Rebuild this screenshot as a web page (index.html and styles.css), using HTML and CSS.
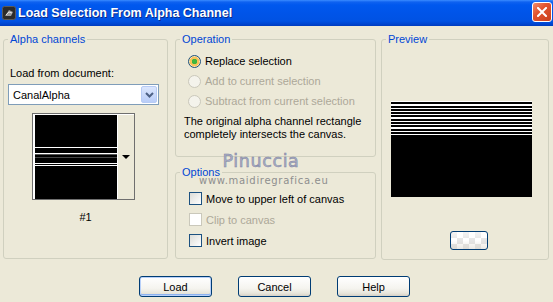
FILE: index.html
```html
<!DOCTYPE html>
<html lang="en">
<head>
  <meta charset="UTF-8" />
  <title>Load Selection From Alpha Channel</title>
  <link rel="stylesheet" href="styles.css">
</head>
<body>
  <div class="titlebar">
    <span class="app-icon">
      <svg width="14" height="14" viewBox="0 0 14 14">
        <rect x="0.5" y="0.5" width="13" height="13" rx="2" fill="#2b2b2b" stroke="#5a5a5a"/>
        <path d="M3 10 L7 4 L11 6 L9 10 Z" fill="#9a9a9a"/>
        <path d="M4 9 L7 6 L10 7" stroke="#e0e0e0" stroke-width="1" fill="none"/>
      </svg>
    </span>
    <span class="title">Load Selection From Alpha Channel</span>
    <span class="close-btn">
      <svg width="10" height="10" viewBox="0 0 10 10">
        <path d="M1 1 L9 9 M9 1 L1 9" stroke="#fff" stroke-width="2" stroke-linecap="square"/>
      </svg>
    </span>
  </div>

  <div class="dialog">
    <fieldset class="group channels">
      <legend>Alpha channels</legend>
      <div class="field-label">Load from document:</div>
      <div class="combo">
        <span class="combo-text">CanalAlpha</span>
        <span class="combo-btn">
          <svg width="9" height="6" viewBox="0 0 9 6">
            <path d="M1 1 L4.5 4.5 L8 1" stroke="#4d6185" stroke-width="2" fill="none"/>
          </svg>
        </span>
      </div>
      <div class="thumb">
        <div class="thumb-img"></div>
        <div class="thumb-drop"><span class="tri"></span></div>
      </div>
      <div class="thumb-name">#1</div>
    </fieldset>

    <div class="middle">
      <fieldset class="group operation">
        <legend>Operation</legend>
        <div class="choice"><span class="radio checked"></span>Replace selection</div>
        <div class="choice disabled"><span class="radio"></span>Add to current selection</div>
        <div class="choice disabled"><span class="radio"></span>Subtract from current selection</div>
        <p class="note">The original alpha channel rectangle<br>completely intersects the canvas.</p>
      </fieldset>

      <fieldset class="group options">
        <legend>Options</legend>
        <div class="check-row"><span class="checkbox"></span>Move to upper left of canvas</div>
        <div class="check-row disabled"><span class="checkbox"></span>Clip to canvas</div>
        <div class="check-row"><span class="checkbox"></span>Invert image</div>
      </fieldset>
    </div>

    <fieldset class="group preview">
      <legend>Preview</legend>
      <div class="preview-img"></div>
      <div class="preview-btn"></div>
    </fieldset>
  </div>

  <div class="actions">
    <button class="btn default">Load</button>
    <button class="btn">Cancel</button>
    <button class="btn">Help</button>
  </div>

  <div class="watermark">
    <div class="wm-name">Pinuccia</div>
    <div class="wm-site">www.maidiregrafica.eu</div>
  </div>
</body>
</html>
```

FILE: styles.css
```css
* {
  box-sizing: border-box;
}
body {
  margin: 0;
  width: 553px;
  height: 302px;
  overflow: hidden;
  position: relative;
  background: #ece9d8;
  font-family: "Liberation Sans", Arial, sans-serif;
  font-size: 11px;
  color: #000;
}
.titlebar {
  height: 26px;
  display: flex;
  align-items: center;
  padding: 0 1px 0 2px;
  background: linear-gradient(#3a8cff 0, #0f62f0 2px, #0058ee 5px, #0054e8 14px, #0052e3 21px, #0046d0 24px, #003cbf 26px);
  color: #fff;
}
.app-icon {
  width: 14px;
  height: 14px;
  display: flex;
}
.title {
  margin-left: 2px;
  font-weight: bold;
  font-size: 12.5px;
  text-shadow: 1px 1px 0 #0a2a8a;
}
.close-btn {
  margin-left: auto;
  margin-bottom: 3px;
  width: 20px;
  height: 20px;
  border: 1px solid #fff;
  border-radius: 3px;
  background: linear-gradient(135deg, #f08d6e 0, #e2542f 40%, #c8401d 100%);
  display: flex;
  align-items: center;
  justify-content: center;
}
.dialog {
  display: flex;
  padding: 7px 0 0 3px;
}
.group {
  margin: 0;
  padding: 0;
  min-width: 0;
  border: 1px solid #d0d0bf;
  border-radius: 3px;
}
.group legend {
  color: #0046d5;
  line-height: 13px;
  padding: 0 2px;
  margin-left: 4px;
}
.channels {
  width: 165px;
  height: 226px;
}
.field-label {
  margin: 21px 0 0 6px;
  line-height: 13px;
}
.combo {
  margin: 4px 0 0 4px;
  width: 151px;
  height: 21px;
  border: 1px solid #7f9db9;
  background: #fff;
  display: flex;
  align-items: center;
}
.combo-text {
  padding-left: 4px;
  flex: 1;
}
.combo-btn {
  width: 16px;
  height: 17px;
  margin-right: 1px;
  border: 1px solid #b7cbf5;
  border-radius: 2px;
  background: linear-gradient(#dbe6fd, #b9cdf8);
  display: flex;
  align-items: center;
  justify-content: center;
}
.thumb {
  margin: 8px 0 0 28px;
  width: 103px;
  height: 87px;
  border: 1px solid #6f6f6f;
  background: #fff;
  display: flex;
  padding: 1px 0 0 2px;
}
.thumb-img {
  width: 82px;
  height: 84px;
  background: linear-gradient(#000 0 32px, #fff 32px 33px, #000 33px 38px, #fff 38px 39px, #555 39px 40px, #000 40px 42px, #444 42px 43px, #000 43px 48px, #fff 48px 49px, #000 49px 50px, #fff 50px 51px, #000 51px);
}
.thumb-drop {
  flex: 1;
  border-left: 1px solid #fff;
  background: #ece9d8;
  display: flex;
  align-items: center;
  justify-content: center;
}
.tri {
  width: 0;
  height: 0;
  border-left: 4px solid transparent;
  border-right: 4px solid transparent;
  border-top: 4px solid #000;
}
.thumb-name {
  margin-top: 11px;
  line-height: 13px;
  text-align: center;
}
.middle {
  width: 201px;
  margin-left: 7px;
  display: flex;
  flex-direction: column;
}
.operation {
  height: 124px;
}
.choice {
  margin-left: 12px;
  height: 20px;
  display: flex;
  align-items: center;
  gap: 4px;
}
.choice:first-of-type {
  margin-top: 5px;
}
.disabled {
  color: #aca899;
}
.radio {
  width: 13px;
  height: 13px;
  border-radius: 50%;
  border: 1px solid #cac8bb;
  background: #f4f3ec;
}
.radio.checked {
  border-color: #1c5180;
  background: radial-gradient(circle, #3fb53f 0 2.5px, #f9c35a 3px 4.5px, #fde3a6 5px);
}
.note {
  margin: 4px 0 0 8px;
  line-height: 13px;
}
.options {
  margin-top: 9px;
  height: 93px;
}
.check-row {
  margin-left: 13px;
  height: 21px;
  display: flex;
  align-items: center;
  gap: 4px;
}
.check-row:first-of-type {
  margin-top: 9px;
}
.checkbox {
  width: 13px;
  height: 13px;
  border: 1px solid #1c5180;
  background: linear-gradient(135deg, #dcdcd7, #fff);
}
.check-row.disabled .checkbox {
  border-color: #cac8bb;
  background: #fff;
}
.preview {
  width: 168px;
  height: 227px;
  margin-left: 5px;
}
.preview-img {
  margin: 55px 0 0 9px;
  width: 141px;
  height: 96px;
  background:
    repeating-linear-gradient(#fff 0 1.3px, #000 1.3px 3.3px) top / 100% 36px no-repeat,
    #000;
}
.preview-btn {
  margin: 34px 0 0 68px;
  width: 38px;
  height: 19px;
  border: 1px solid #003c74;
  border-radius: 3px;
  background:
    linear-gradient(rgba(255, 255, 255, 0.6), rgba(255, 255, 255, 0) 50%, rgba(214, 208, 197, 0.5)),
    conic-gradient(#fff 25%, #e4e4e4 0 50%, #fff 0 75%, #e4e4e4 0) 0 0 / 12px 12px;
}
.actions {
  display: flex;
  gap: 26px;
  padding-left: 139px;
  margin-top: 16px;
}
.btn {
  width: 73px;
  height: 21px;
  padding: 0;
  font-family: "Liberation Sans", Arial, sans-serif;
  font-size: 11px;
  color: #000;
  border: 1px solid #003c74;
  border-radius: 3px;
  background: linear-gradient(#fff 0, #f5f4ef 60%, #e8e6dc 85%, #d6d0c5 100%);
}
.btn.default {
  box-shadow: inset 0 0 0 1px #b8d0f9, inset 0 -1px 0 1px #8cb2f0;
}
/* watermark stamped over the dialog */
.watermark {
  position: absolute;
  left: 199px;
  top: 151px;
  width: 124px;
  text-align: center;
  pointer-events: none;
}
.wm-name {
  font-family: "DejaVu Sans", sans-serif;
  font-size: 17.5px;
  line-height: 21px;
  color: #a9aec6;
  -webkit-text-stroke: 0.5px #7d82a0;
  letter-spacing: 0.6px;
}
.wm-site {
  margin-top: 3px;
  font-family: "DejaVu Sans", sans-serif;
  font-size: 10px;
  line-height: 12px;
  color: #8e8e8e;
  letter-spacing: 0.7px;
}
```
